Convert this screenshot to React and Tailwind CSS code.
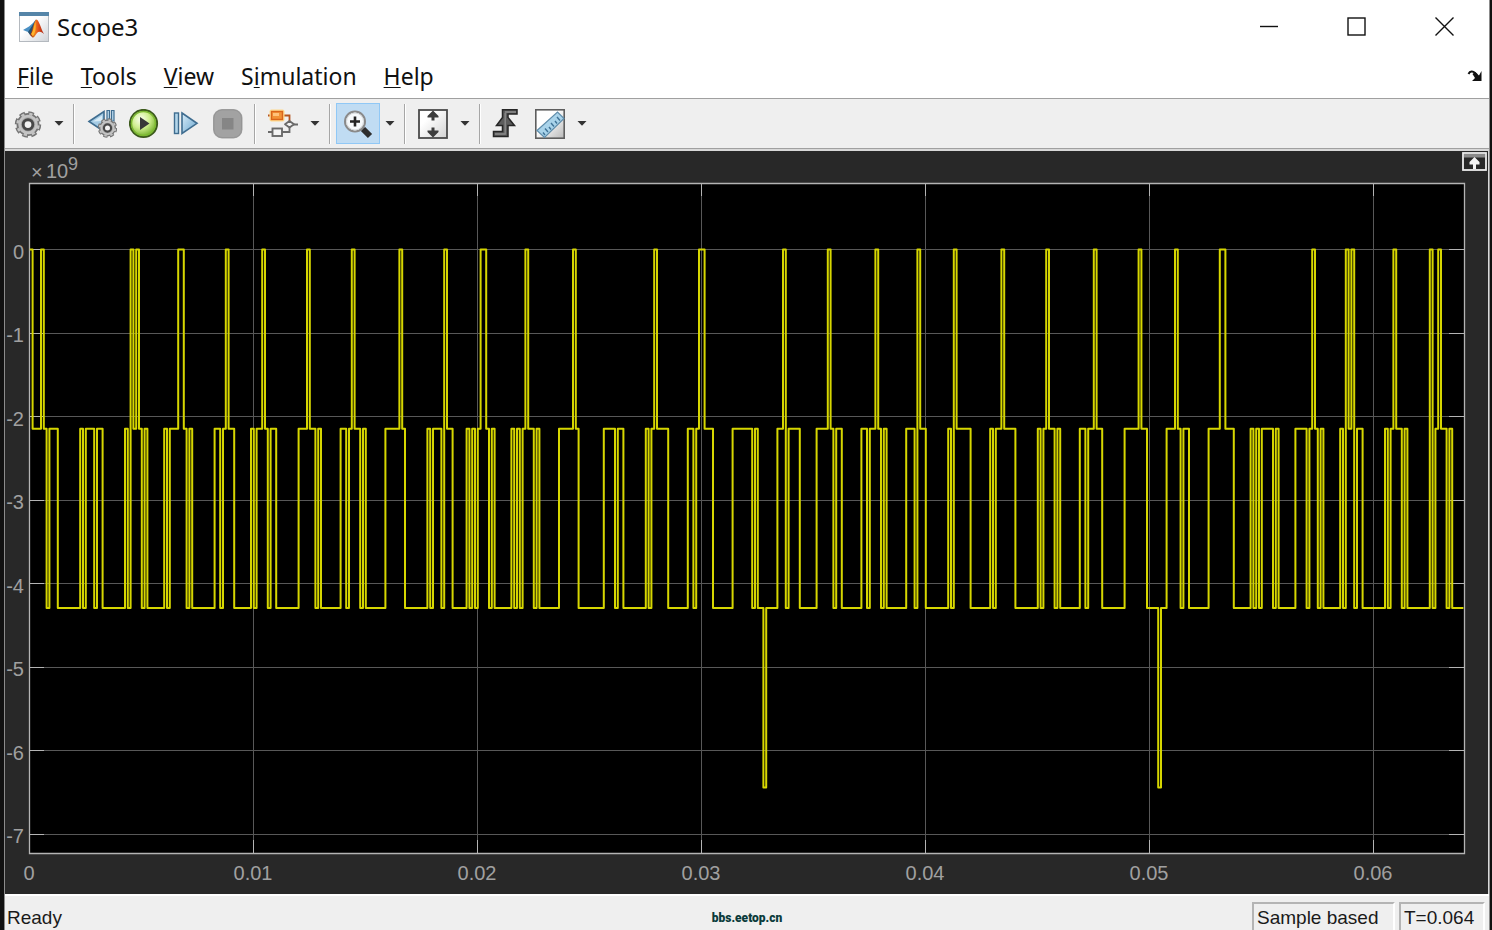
import { useState } from "react";

// Level changes of the scope trace: sample index followed by the level it steps to.
const TRACE = `
0H 1M 4H 5M 6L 7M 10L 18M 19L 20M 23L 24M 26L 34M 35L 36H 37M 38H 39M 40L 41M 42L
48M 49L 50M 53H 55M 56L 57M 58L 66M 68L 69M 70H 71M 73L 79M 80L 81M 83H 84M 85L 86M 88L
96M 99H 100M 102L 103M 104L 111M 113L 114M 115H 116M 118L 119M 120L 127M 132H 133M 134L
142M 143L 144M 147L 148H 149M 151L 156M 157L 158M 159L 160M 161H 163M 164L 165M 166L
172M 173L 174M 175L 176M 177H 178M 180L 181M 182L 189M 194H 195M 196L 205M 209L 210M 212L
220M 221L 222M 223H 224M 228L 235M 237L 238M 239H 241M 244L 251M 258L 259M 260L 262D 263L
267M 269H 270L 271M 275L 281M 285H 286M 287L 288M 290L 297M 299L 300M 302H 303M 304L 305M 306L
313M 316L 317H 318M 320L 328M 329L 330H 331M 336L 343M 344L 345M 347H 348M 352L
360M 361L 362M 363H 364M 366L 367M 368L 375M 377L 378M 380H 381M 383L 391M 396H 397M 399L
403D 404L 406M 409H 410M 411L 412M 414L 421M 425H 427M 430L 436M 437L 438M 439L 440M 444L
445M 446L 452M 456L 457M 458H 459M 460L 461M 462L 468M 469L 470H 471M 472H 473L 474M 476L
484M 485L 486M 487H 488M 490L 491M 492L 500H 501L 502M 503H 504M 506L 507M 508L
`;

const LEVELS = { H: 0, M: -2.147, L: -4.295, D: -6.442 };
const SAMPLES = 512;

const AXES = { left: 24, right: 1459, top: 32, bottom: 702 };

const sampleX = (n) => 24.8 + n * 2.8;
const valueY = (v) => 98.5 - v * 83.5;
const crisp = (v) => Math.floor(v) + 0.5;

const tracePath = () => {
    const steps = TRACE.trim().split(/\s+/);
    let d = "";
    steps.forEach((step, i) => {
        const x = sampleX(parseInt(step, 10)).toFixed(1);
        const y = valueY(LEVELS[step.slice(-1)]).toFixed(1);
        d += i === 0 ? `M${x} ${y}` : `H${x}V${y}`;
    });
    return `${d}H${sampleX(SAMPLES).toFixed(1)}`;
};

const X_TICKS = ["0", "0.01", "0.02", "0.03", "0.04", "0.05", "0.06"];
const Y_TICKS = [0, -1, -2, -3, -4, -5, -6, -7];

function MatlabLogo() {
    return (
        <svg viewBox="0 0 30 30" className="size-[30px]" aria-hidden="true">
            <defs>
                <linearGradient id="logoBg" x1="0" y1="0" x2="1" y2="1">
                    <stop offset="0.4" stopColor="#fff" />
                    <stop offset="1" stopColor="#cfd3d8" />
                </linearGradient>
                <linearGradient id="peak" x1="0" y1="0" x2="1" y2="0">
                    <stop offset="0" stopColor="#7a1c10" />
                    <stop offset="0.35" stopColor="#f4801e" />
                    <stop offset="0.6" stopColor="#e0501a" />
                    <stop offset="1" stopColor="#a82010" />
                </linearGradient>
            </defs>
            <rect x="0.5" y="0.5" width="29" height="29" fill="url(#logoBg)" stroke="#b4b9bf" />
            <rect x="0" y="0" width="30" height="4" fill="#5585a8" />
            <path d="M4 18 L10 14.5 L14 11 L17 7.5 L14 19 L11 22 L9 20 Z" fill="#4a90c4" />
            <path d="M9 20 L13 14 L17 7.5 L15 20 L11 23 Z" fill="#28506e" />
            <path d="M11 23 C14 18 15 8 17.5 7.5 C20 8 22 17 25 22 C22 19.5 20 19 18 21 C16 24 15 26 13.5 25.5 Z" fill="url(#peak)" />
            <path d="M12 22 C14.5 19 15 13 16.5 10 C17 16 16.5 21 14 24.5 Z" fill="#ffb42c" />
        </svg>
    );
}

// Shared cog shape, used by the settings and the step-back icons
function Cog({ cx, cy, r }) {
    return (
        <g transform={`translate(${cx} ${cy}) scale(${r / 14})`}>
            <circle r="11.5" fill="none" stroke="#747474" strokeWidth="4.4" strokeDasharray="5.6 3.432" />
            <circle r="11" fill="#c4c4c4" stroke="#747474" strokeWidth="1.8" />
            <circle r="10.9" fill="none" stroke="#c4c4c4" strokeWidth="2.6" strokeDasharray="3.4 5.161" strokeDashoffset="-1" />
            <circle r="7.5" fill="#a9a9a9" />
            <circle r="5" fill="#f2f2f2" stroke="#484848" strokeWidth="3" />
        </g>
    );
}

function SettingsIcon() {
    return (
        <svg viewBox="0 0 30 30" className="size-[30px]" aria-hidden="true">
            <Cog cx={16} cy={15.5} r={13.5} />
        </svg>
    );
}

function StepBackIcon() {
    return (
        <svg viewBox="0 0 30 30" className="size-[30px]" aria-hidden="true">
            <path d="M2 12.5 L17 2.5 V22.5 Z" fill="#a5cbe4" stroke="#3f6d90" strokeWidth="1.6" />
            <path d="M20 1.5 H22.5 V12 H20 Z M24.5 1.5 H27 V12 H24.5 Z" fill="#b9d8ec" stroke="#3f6d90" strokeWidth="1.2" />
            <path d="M6 12.5 L15 6.5 V12 Z" fill="#d8ebf6" />
            <Cog cx={20.5} cy={19} r={10} />
        </svg>
    );
}

function RunIcon() {
    return (
        <svg viewBox="0 0 30 30" className="size-[30px]" aria-hidden="true">
            <defs>
                <radialGradient id="runFill" cx="0.4" cy="0.35" r="0.65">
                    <stop offset="0" stopColor="#fbfff0" />
                    <stop offset="0.5" stopColor="#cfee8e" />
                    <stop offset="1" stopColor="#6fae27" />
                </radialGradient>
            </defs>
            <circle cx="14.5" cy="14.5" r="13.6" fill="url(#runFill)" stroke="#3c5a1c" strokeWidth="2" />
            <circle cx="14.5" cy="14.5" r="12" fill="none" stroke="#7cb832" strokeWidth="1.5" />
            <path d="M11 8 L20.5 14.5 L11 21 Z" fill="#383838" />
        </svg>
    );
}

function StepForwardIcon() {
    return (
        <svg viewBox="0 0 30 30" className="size-[30px]" aria-hidden="true">
            <defs>
                <linearGradient id="stepFill" x1="0" y1="0" x2="1" y2="1">
                    <stop offset="0" stopColor="#d9edf8" />
                    <stop offset="1" stopColor="#6aa6cf" />
                </linearGradient>
            </defs>
            <rect x="3.5" y="4" width="4" height="20.5" fill="#b4d6ea" stroke="#3f6d90" strokeWidth="1.4" />
            <path d="M11 4 L26 14.3 L11 24.5 Z" fill="url(#stepFill)" stroke="#3f6d90" strokeWidth="1.6" />
        </svg>
    );
}

function StopIcon() {
    return (
        <svg viewBox="0 0 30 30" className="size-[30px]" aria-hidden="true">
            <rect x="0" y="0" width="29.5" height="29.5" rx="9" fill="#a2a2a2" />
            <rect x="1" y="1" width="27.5" height="27.5" rx="8" fill="none" stroke="#959595" />
            <rect x="9" y="9" width="11.5" height="11.5" fill="#868686" />
        </svg>
    );
}

function BlocksIcon() {
    return (
        <svg viewBox="0 0 30 30" className="size-[30px]" aria-hidden="true">
            <path d="M0 6.5 H4 M15 6.5 H21.5 V12" fill="none" stroke="#b5541e" strokeWidth="1.8" />
            <rect x="1.5" y="0.5" width="15" height="12" rx="2" fill="#ffd98c" />
            <rect x="3.5" y="2.5" width="11" height="8" fill="#f29236" stroke="#d9641a" strokeWidth="1.4" />
            <rect x="5" y="4" width="6" height="3" fill="#ffc27a" />
            <path d="M0 23 H4 M14 23 H21.5 V18 M25 15.5 H30" fill="none" stroke="#6a6a6a" strokeWidth="1.8" />
            <rect x="4.5" y="19.5" width="9.5" height="7.5" fill="#f4f4f4" stroke="#6a6a6a" strokeWidth="1.9" />
            <path d="M17 15.2 L21.5 12 L26 15.2 L21.5 18.4 Z" fill="#f4f4f4" stroke="#6a6a6a" strokeWidth="1.8" strokeLinejoin="round" />
        </svg>
    );
}

function ZoomIcon() {
    return (
        <svg viewBox="0 0 30 30" className="size-[30px]" aria-hidden="true">
            <path d="M18 18 L21 21" stroke="#777" strokeWidth="4" />
            <path d="M20 20 L27 27" stroke="#2e2e2e" strokeWidth="6" />
            <circle cx="12" cy="12.5" r="10" fill="#f6f9fb" stroke="#8a8a8a" strokeWidth="2" />
            <circle cx="12" cy="12.5" r="8.5" fill="none" stroke="#d4d8da" />
            <path d="M12 7.5 V17.5 M7 12.5 H17" stroke="#222" strokeWidth="2.6" />
        </svg>
    );
}

function FitIcon() {
    return (
        <svg viewBox="0 0 30 30" className="size-[30px]" aria-hidden="true">
            <defs>
                <linearGradient id="fitFill" x1="0" y1="0" x2="1" y2="1">
                    <stop offset="0.3" stopColor="#fff" />
                    <stop offset="1" stopColor="#d2d2d2" />
                </linearGradient>
            </defs>
            <rect x="1" y="1" width="28" height="28" fill="url(#fitFill)" stroke="#4a4a4a" strokeWidth="1.8" />
            <path d="M15 1.5 L20.5 7 V8.5 H16.5 V11.5 H13.5 V8.5 H9.5 V7 Z" fill="#3c3c3c" />
            <path d="M15 28.5 L20.5 23 V21.5 H16.5 V18.5 H13.5 V21.5 H9.5 V23 Z" fill="#3c3c3c" />
        </svg>
    );
}

function TriggerIcon() {
    return (
        <svg viewBox="0 0 30 30" className="size-[30px]" aria-hidden="true">
            <path
                d="M10.5 0.8 H25 V5 H16 V8.5 L22.5 16.5 H16 V27.5 H1.5 V22.5 H10.5 V16.5 H4.5 L10.5 8.5 Z"
                fill="#5c5c5c"
                stroke="#262626"
                strokeWidth="1.5"
            />
            <path d="M13 3 H24 M13.2 4 V25 H3" fill="none" stroke="#8a8a8a" strokeWidth="1.3" />
        </svg>
    );
}

function RulerIcon() {
    return (
        <svg viewBox="0 0 30 30" className="size-[30px]" aria-hidden="true">
            <defs>
                <linearGradient id="rulerBg" x1="0" y1="0" x2="1" y2="1">
                    <stop offset="0.4" stopColor="#fff" />
                    <stop offset="1" stopColor="#b8b8b8" />
                </linearGradient>
            </defs>
            <rect x="0.8" y="0.8" width="28.4" height="28.4" fill="url(#rulerBg)" stroke="#5e5e5e" strokeWidth="1.6" />
            <path d="M2 21.5 L22.5 3 L29 9.5 L9.5 28.5 Z" fill="#a9d3ea" stroke="#5f8dab" strokeWidth="1.2" />
            <path
                d="M10 26 L8 23.5 M13 23 L10 19.5 M16 20.5 L14 18 M19 17.5 L16 14 M22 14.5 L20 12 M25 11.5 L22 8"
                stroke="#3f7296"
                strokeWidth="1.4"
            />
        </svg>
    );
}

function ToolButton({ label, active, narrow, onClick, children }) {
    return (
        <button
            type="button"
            aria-label={label}
            aria-pressed={active}
            onClick={onClick}
            className={`flex h-[41px] shrink-0 items-center justify-center border ${
                narrow ? "w-[42px]" : "w-11"
            } ${active ? "border-[#90c8f6] bg-[#c0dcf3]" : "border-transparent hover:bg-[#dcebf7]"}`}
        >
            {children}
        </button>
    );
}

function Caret({ label }) {
    return (
        <button type="button" aria-label={label} className="flex h-[41px] w-5 shrink-0 items-center justify-center">
            <svg viewBox="0 0 10 5" className="h-[5px] w-[10px]" aria-hidden="true">
                <path d="M0.5 0 H9.5 L5 4.8 Z" fill="#333" />
            </svg>
        </button>
    );
}

function Separator() {
    return <div className="mr-[5px] ml-1 h-10 w-[2px] shrink-0 border-r border-white bg-[#a6a6a6]" />;
}

function TitleBar() {
    return (
        <header className="flex h-[54px] items-center pl-[14px]">
            <MatlabLogo />
            <h1 className="ml-2 flex-1 text-[24px] leading-8 text-[#111]">Scope3</h1>
            <button type="button" aria-label="Minimize" className="flex h-full w-22 items-center justify-center">
                <svg viewBox="0 0 20 20" className="size-5" aria-hidden="true">
                    <path d="M1 9.5 H19" stroke="#111" strokeWidth="1.4" />
                </svg>
            </button>
            <button type="button" aria-label="Maximize" className="flex h-full w-22 items-center justify-center">
                <svg viewBox="0 0 20 20" className="size-5" aria-hidden="true">
                    <rect x="1" y="1" width="17" height="17" fill="none" stroke="#111" strokeWidth="1.4" />
                </svg>
            </button>
            <button type="button" aria-label="Close" className="flex h-full w-22 items-center justify-center">
                <svg viewBox="0 0 20 20" className="size-5" aria-hidden="true">
                    <path d="M0.5 0.5 L18.5 18.5 M18.5 0.5 L0.5 18.5" stroke="#111" strokeWidth="1.4" />
                </svg>
            </button>
        </header>
    );
}

const MENU = [
    ["", "F", "ile"],
    ["", "T", "ools"],
    ["", "V", "iew"],
    ["S", "i", "mulation"],
    ["", "H", "elp"],
];

function MenuBar() {
    return (
        <nav className="flex h-11 items-center pr-[6px] pl-3">
            <div className="flex flex-1 gap-[27px]">
                {MENU.map(([before, key, after]) => (
                    <button key={before + key + after} type="button" className="text-[23px] leading-8 text-[#111]">
                        {before}
                        <span className="underline decoration-1 underline-offset-2">{key}</span>
                        {after}
                    </button>
                ))}
            </div>
            <button type="button" aria-label="Dock window">
                <svg viewBox="0 0 16 12" className="h-3 w-4" aria-hidden="true">
                    <path d="M1.5 4 C3 0.8 6 1 8 3 L10 5" fill="none" stroke="#111" strokeWidth="2" />
                    <path d="M14.5 1 V11 H5 L8 8 L5.5 4 L8 2 L12 5.5 Z" fill="#111" />
                </svg>
            </button>
        </nav>
    );
}

function Toolbar() {
    const [zoomOn, setZoomOn] = useState(true);

    return (
        <div
            role="toolbar"
            aria-label="Scope toolbar"
            className="flex h-[51px] items-center border-t border-b border-t-[#a0a0a0] border-b-[#a0a0a0] bg-[#efefef]"
        >
            <ToolButton label="Configuration properties"><SettingsIcon /></ToolButton>
            <Caret label="Configuration menu" />
            <Separator />
            <div className="flex px-px">
                <ToolButton narrow label="Stepping options"><StepBackIcon /></ToolButton>
                <ToolButton narrow label="Run"><RunIcon /></ToolButton>
                <ToolButton narrow label="Step forward"><StepForwardIcon /></ToolButton>
                <ToolButton narrow label="Stop"><StopIcon /></ToolButton>
            </div>
            <Separator />
            <ToolButton label="Highlight block"><BlocksIcon /></ToolButton>
            <Caret label="Highlight menu" />
            <Separator />
            <ToolButton label="Zoom" active={zoomOn} onClick={() => setZoomOn(!zoomOn)}><ZoomIcon /></ToolButton>
            <Caret label="Zoom menu" />
            <Separator />
            <ToolButton label="Scale axes"><FitIcon /></ToolButton>
            <Caret label="Scale menu" />
            <Separator />
            <ToolButton narrow label="Triggers"><TriggerIcon /></ToolButton>
            <ToolButton label="Cursor measurements"><RulerIcon /></ToolButton>
            <Caret label="Measurements menu" />
        </div>
    );
}

function Plot() {
    const { left, right, top, bottom } = AXES;

    return (
        <main className="relative border-t-2 border-[#d8d8d8] bg-[#282828]">
            <svg viewBox="0 0 1484 743" className="block h-auto w-full font-['Liberation_Sans',Arial,sans-serif]">
                <rect x={left} y={top} width={right - left} height={bottom - top} fill="#000" />
                <path d="M1483.5 0V743" stroke="#d8d8d8" />

                {/* grid lines with brighter ticks at both ends */}
                {X_TICKS.slice(1).map((label, i) => {
                    const x = crisp(24.6 + 224 * (i + 1));
                    return (
                        <g key={label}>
                            <path d={`M${x} ${top}V${bottom}`} stroke="#585858" />
                            <path d={`M${x} ${top}v13M${x} ${bottom}v-13`} stroke="#b4b4b4" />
                        </g>
                    );
                })}
                {Y_TICKS.map((v) => {
                    const y = crisp(valueY(v));
                    return (
                        <g key={v}>
                            <path d={`M${left} ${y}H${right}`} stroke="#585858" />
                            <path d={`M${left} ${y}h15M${right} ${y}h-15`} stroke="#b4b4b4" />
                        </g>
                    );
                })}
                <path
                    d={`M${left}.5 ${top}.5H${right}.5V${bottom}.5H${left}.5Z`}
                    fill="none"
                    stroke="#b4b4b4"
                    strokeWidth="1.3"
                />

                <path d={tracePath()} fill="none" stroke="#d6d600" strokeWidth="2" strokeLinejoin="round" />

                {/* tick labels */}
                <g fill="#a0a0a0" fontSize="20">
                    {X_TICKS.map((label, i) => (
                        <text key={label} x={24 + 224 * i} y="729" textAnchor="middle">{label}</text>
                    ))}
                    {Y_TICKS.map((v) => (
                        <text key={v} x="19" y={Math.round(valueY(v)) + 9} textAnchor="end">{v}</text>
                    ))}
                    <text x="26" y="28" fontSize="20">×</text>
                    <text x="41" y="27">10</text>
                    <text x="63" y="19" fontSize="18">9</text>
                </g>
            </svg>
            <button type="button" aria-label="Maximize axes" className="absolute top-px right-[2px]">
                <svg viewBox="0 0 25 19" className="h-[19px] w-[25px]" aria-hidden="true">
                    <rect x="1" y="1" width="23" height="17" fill="#282828" stroke="#ededed" strokeWidth="1.8" />
                    <rect x="2" y="2" width="21" height="3.5" fill="#8a8a8a" />
                    <path d="M12.5 5 L17.5 10 V12.5 H14 V17 H11 V12.5 H7.5 V10 Z" fill="#f4f4f4" />
                </svg>
            </button>
        </main>
    );
}

function StatusBar() {
    return (
        <footer className="grid flex-1 grid-cols-[1fr_auto_1fr] border-t-2 border-white bg-[#efefef] pt-[6px] font-['Liberation_Sans',Arial,sans-serif] text-[19px] leading-8 text-[#1a1a1a]">
            <span className="pl-[2px]">Ready</span>
            <span className="font-[Roboto,sans-serif] text-[12px] font-black text-[#0b3b3b]">
                bbs.eetop.cn
            </span>
            <div className="flex justify-end gap-1 pr-1 leading-7">
                <span className="w-[143px] border-t-2 border-r-2 border-l-2 border-t-[#b4b4b4] border-r-white border-l-[#b4b4b4] pl-[3px] whitespace-nowrap">
                    Sample based
                </span>
                <span className="w-[86px] border-t-2 border-r-2 border-l-2 border-t-[#b4b4b4] border-r-white border-l-[#b4b4b4] pl-[3px] whitespace-nowrap">
                    T=0.064
                </span>
            </div>
        </footer>
    );
}

function App() {
    return (
        <div className="min-h-screen bg-[#111] pr-[2px] pl-1">
            <div className="flex min-h-screen flex-col border-r border-l border-[#8c8c8c] bg-white font-['Noto_Sans','Open_Sans',sans-serif]">
                <TitleBar />
                <MenuBar />
                <Toolbar />
                <Plot />
                <StatusBar />
            </div>
        </div>
    );
}

export default App;
